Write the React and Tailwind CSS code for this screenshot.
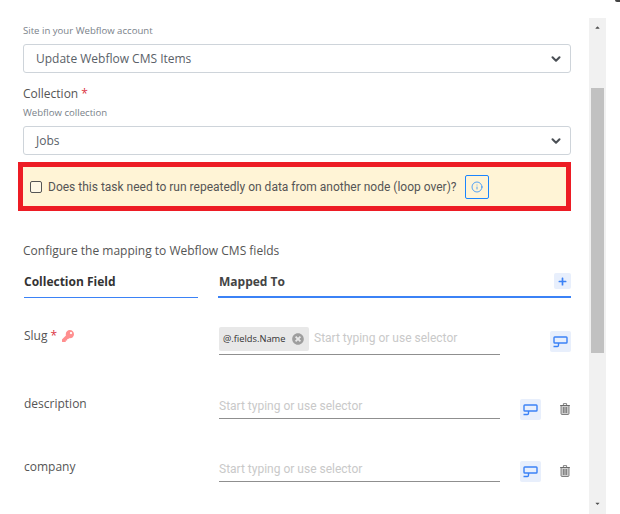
import React from 'react'
import { FaKey, FaTimesCircle, FaPlus, FaCaretUp, FaCaretDown } from 'react-icons/fa'
import { FiChevronDown, FiInfo } from 'react-icons/fi'

const SelectorIcon = () => (
    <svg width="15" height="12" viewBox="0 0 15 12" fill="none" stroke="#3b82f6" strokeWidth="1.4">
        <rect x="1" y="1" width="13" height="6" rx="0.8" />
        <path d="M5.5 7v2.2c0 .8-.4 1.3-1.2 1.3H0.5" />
    </svg>
)

const TrashIcon = () => (
    <svg width="10" height="12" viewBox="0 0 10 12" fill="#cfcfcf" stroke="#666" strokeWidth="0.8">
        <path d="M1 2.5h8V10.6c0 .5-.4.9-.9.9H1.9c-.5 0-.9-.4-.9-.9z" />
        <path d="M0 2.5h10M3.4 2.3V.6h3.2v1.7M3.4 4v6M5 4v6M6.6 4v6" fill="none" />
    </svg>
)

const SelectBox = ({ value }) => (
    <div className="h-[29px] w-full flex items-center justify-between pl-[12px] pr-[7px] bg-white border border-[#ced4da] rounded-[3px] text-[12px] text-[#5a6168]">
        <span>{value}</span>
        <FiChevronDown size={14} strokeWidth={3.5} className="text-[#4a4f55]" />
    </div>
)

const SelectorButton = () => (
    <button className="w-[21px] h-[21px] flex items-center justify-center bg-[#e8effc] rounded-[2px]">
        <SelectorIcon />
    </button>
)

const MappingRow = ({ label, top, iconTop, trashTop }) => (
    <div className={`flex items-start ${top}`}>
        <div className="w-[196px] pl-px text-[12px] leading-[16px] text-[#555]">{label}</div>
        <div className="w-[281px] mt-[-5px] h-[28px] flex items-end border-b border-[#8f8f8f] pb-[4px]">
            <span className="font-['Roboto',sans-serif] text-[12px] leading-[16px] text-[#c9c9c9]">Start typing or use selector</span>
        </div>
        <div className={`ml-[20px] ${iconTop}`}>
            <SelectorButton />
        </div>
        <div className={`ml-[18px] ${trashTop} w-[12px] flex justify-center`}>
            <TrashIcon />
        </div>
    </div>
)

const App = () => {
    return (
        <div className="w-[620px] h-[514px] overflow-hidden bg-white flex font-['Open_Sans',sans-serif]">
            <div className="w-[571px] pl-[23px] shrink-0">
                <p className="mt-[24px] text-[9.6px] leading-[13px] text-[#7a828a]">Site in your Webflow account</p>
                <div className="mt-[7px]">
                    <SelectBox value="Update Webflow CMS Items" />
                </div>
                <p className="mt-[12px] text-[12px] leading-[18px] text-[#555]">
                    Collection <span className="text-[#dc3545]">*</span>
                </p>
                <p className="mt-[3px] text-[9.6px] leading-[13px] text-[#7a828a]">Webflow collection</p>
                <div className="mt-[7px]">
                    <SelectBox value="Jobs" />
                </div>

                <div className="mt-[7px] ml-[-5px] h-[49px] border-[5px] border-[#ed1c24] bg-[#fff4d6] flex items-center pl-[7px] font-['Roboto',sans-serif]">
                    <span className="w-[12px] h-[12px] border border-[#555] rounded-[2px] bg-white/40 shrink-0" />
                    <span className="ml-[6px] text-[12px] text-[#555]">Does this task need to run repeatedly on data from another node (loop over)?</span>
                    <button className="ml-[8px] w-[24px] h-[24px] flex items-center justify-center border border-[#1a85ff] rounded-[2px] text-[#1a85ff]">
                        <FiInfo size={12} strokeWidth={1.5} />
                    </button>
                </div>

                <p className="mt-[32px] text-[12px] leading-[16px] text-[#555]">Configure the mapping to Webflow CMS fields</p>

                <div className="mt-[15px] flex">
                    <div className="ml-px w-[174px] h-[24px] border-b border-[#3b82f6] text-[12px] leading-[16px] font-bold text-[#333]">Collection Field</div>
                    <div className="ml-[20px] flex-1 h-[24px] border-b-2 border-[#3b82f6] flex items-start justify-between pl-px">
                        <span className="text-[12px] leading-[16px] font-bold text-[#444]">Mapped To</span>
                        <button className="mt-[-1px] w-[17px] h-[16px] flex items-center justify-center bg-[#e8effc] rounded-[2px] text-[#3b82f6]">
                            <FaPlus size={9} />
                        </button>
                    </div>
                </div>

                <div className="mt-[30px] flex items-start">
                    <div className="w-[196px] pl-px text-[12px] leading-[16px] text-[#555] flex items-center">
                        Slug <span className="ml-[3px] text-[#dc3545]">*</span>
                        <FaKey size={12} className="ml-[5px] text-[#ff8f8f]" />
                    </div>
                    <div className="w-[281px] h-[28px] mt-[-1px] border-b border-[#8f8f8f] flex items-start">
                        <span className="w-[90px] h-[24px] flex items-center justify-between pl-[4px] pr-[5px] bg-[#e8e8e8] rounded-[2px] text-[9.3px] text-[#333]">
                            @.fields.Name
                            <FaTimesCircle size={12} className="text-[#9e9e9e]" />
                        </span>
                        <span className="ml-[5px] mt-[3px] font-['Roboto',sans-serif] text-[12px] leading-[16px] text-[#c9c9c9]">Start typing or use selector</span>
                    </div>
                    <div className="ml-[50px] mt-[3px]">
                        <SelectorButton />
                    </div>
                </div>

                <MappingRow label="description" top="mt-[41px]" iconTop="mt-[3px]" trashTop="mt-[7px]" />
                <MappingRow label="company" top="mt-[39px]" iconTop="mt-[2px]" trashTop="mt-[6px]" />
            </div>

            <div className="ml-[18px] mt-[18px] w-[17px] h-[496px] bg-[#f1f1f1] flex flex-col items-center">
                <FaCaretUp size={11} className="mt-[6px] h-[7px] text-[#505050]" />
                <div className="mt-[57px] w-[13px] h-[265px] bg-[#c1c1c1]" />
                <FaCaretDown size={11} className="mt-auto mb-[7px] h-[7px] text-[#505050]" />
            </div>

            <div className="flex-1">
                <div className="ml-[9px] w-[5px] h-[2px] bg-[#444] rounded-bl-[2px]" />
            </div>
        </div>
    )
}

export default App
